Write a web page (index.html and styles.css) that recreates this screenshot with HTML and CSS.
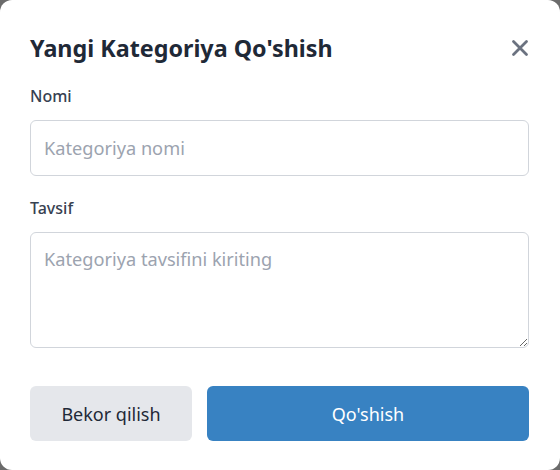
FILE: index.html
```html
<!DOCTYPE html>
<html lang="uz">
<head>
    <meta charset="UTF-8">
    <title>Yangi Kategoriya</title>
    <link rel="stylesheet" href="styles.css">
</head>
<body>

<div class="modal">
    <div class="modal-head">
        <h2 class="modal-title">Yangi Kategoriya Qo'shish</h2>
        <button class="close-btn" title="Yopish">
            <svg width="18" height="18" viewBox="0 0 18 18">
                <path d="M2.5 2.5 L15.5 15.5 M15.5 2.5 L2.5 15.5" stroke="#6b7280" stroke-width="2.8" stroke-linecap="round"/>
            </svg>
        </button>
    </div>

    <div class="field">
        <label class="label" for="name">Nomi</label>
        <input class="input" id="name" type="text" placeholder="Kategoriya nomi">
    </div>

    <div class="field">
        <label class="label" for="desc">Tavsif</label>
        <textarea class="input textarea" id="desc" placeholder="Kategoriya tavsifini kiriting"></textarea>
    </div>

    <div class="actions">
        <button class="btn btn-cancel">Bekor qilish</button>
        <button class="btn btn-primary">Qo'shish</button>
    </div>
</div>

</body>
</html>
```

FILE: styles.css
```css
* {
    margin: 0;
    padding: 0;
    box-sizing: border-box;
}

body {
    background: #6b6b6b;
    font-family: "Noto Sans", "Open Sans", sans-serif;
    color: #1f2937;
}

.modal {
    height: 470px;
    background: #fff;
    border-radius: 12px;
    padding: 30px 31px 0 30px;
}

.modal-head {
    display: flex;
    align-items: center;
    justify-content: space-between;
    height: 36px;
    margin-bottom: 18px;
}

.modal-title {
    font-size: 23.3px;
    font-weight: 700;
    color: #1f2937;
}

.close-btn {
    border: none;
    background: none;
    display: flex;
}

.field {
    margin-bottom: 20px;
}

.label {
    display: block;
    font-size: 16px;
    font-weight: 500;
    color: #374151;
    line-height: 24px;
    margin-bottom: 12px;
}

.input {
    display: block;
    width: 100%;
    height: 56px;
    border: 1px solid #d1d5db;
    border-radius: 6px;
    padding: 0 13px;
    font-family: inherit;
    font-size: 18.2px;
    color: #1f2937;
}

.input::placeholder {
    color: #9ca3af;
}

.textarea {
    height: 116px;
    padding: 14px 13px;
    resize: vertical;
}

.actions {
    display: flex;
    gap: 15px;
    padding-top: 18px;
}

.btn {
    height: 55px;
    border: none;
    border-radius: 6px;
    font-family: inherit;
    font-size: 18px;
}

.btn-cancel {
    width: 162px;
    background: #e5e7eb;
    color: #1f2937;
}

.btn-primary {
    flex: 1;
    background: #3882c2;
    color: #fff;
}
```
